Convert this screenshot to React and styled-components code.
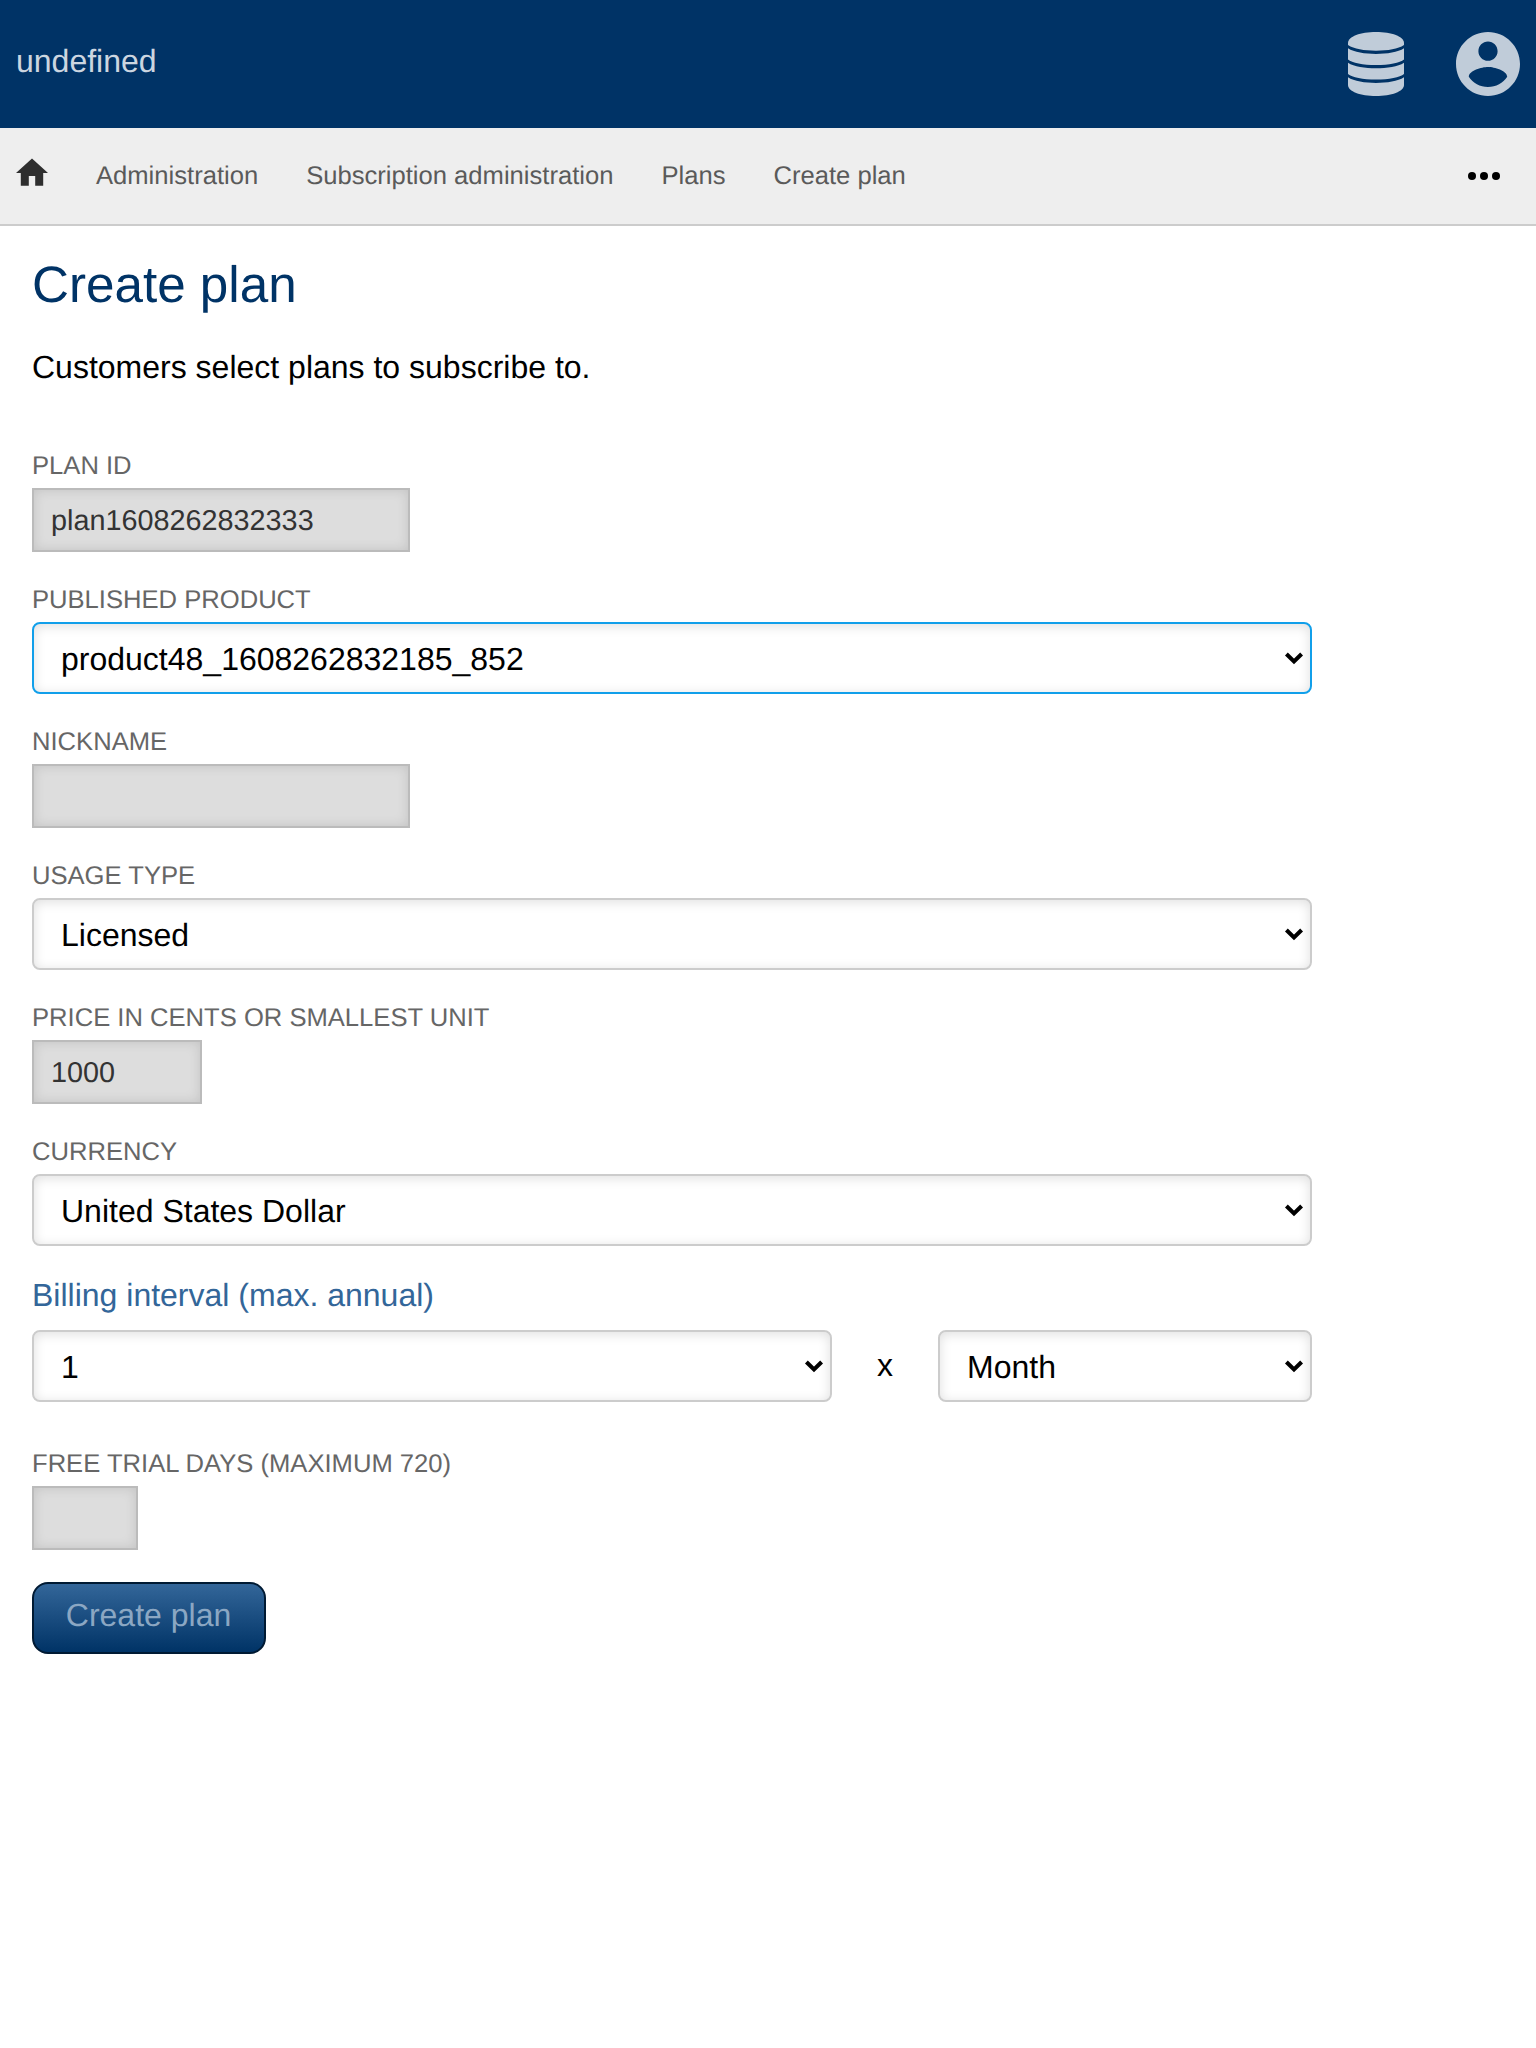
import React from 'react';
import styled, { createGlobalStyle } from 'styled-components';

const GlobalStyle = createGlobalStyle`
  *, *::before, *::after { box-sizing: border-box; }
  html { background: #fff; }
  body {
    margin: 0;
    font-family: "Liberation Sans", Arial, Helvetica, sans-serif;
    font-size: 32px;
    color: #000;
    text-rendering: geometricPrecision;
  }
  input, select, button { font-family: inherit; margin: 0; text-rendering: inherit; }
`;

const Page = styled.div`
  min-height: 2048px;
  background: #fff;
`;

const Header = styled.header`
  display: flex;
  align-items: center;
  justify-content: space-between;
  height: 128px;
  padding: 0 16px;
  background: #003366;
`;

const Brand = styled.a`
  padding-bottom: 7px;
  line-height: 36px;
  color: #ccd6e0;
`;

const HeaderActions = styled.div`
  display: flex;
  align-items: center;
  gap: 52px;
  color: #c0ccd9;
  svg { display: block; fill: currentColor; }
`;

const NavBar = styled.nav`
  display: flex;
  align-items: center;
  height: 98px;
  padding: 0 36px 0 16px;
  background: #eee;
  border-bottom: 2px solid #ccc;
`;

const HomeLink = styled.a`
  display: block;
  width: 32px;
  height: 32px;
  margin: 0 48px 6px 0;
  svg { display: block; fill: #2e2e2e; }
`;

const Crumbs = styled.div`
  display: flex;
  flex: 1;
  gap: 48px;
`;

const Crumb = styled.a`
  font-size: 25.6px;
  line-height: 30px;
  color: #5a5a5a;
`;

const MoreButton = styled.a`
  display: flex;
  gap: 4px;
`;

const Dot = styled.span`
  width: 8px;
  height: 8px;
  border-radius: 50%;
  background: #000;
`;

const Main = styled.main`
  display: flex;
  flex-direction: column;
  align-items: flex-start;
  width: 1344px;
  padding: 29px 32px 0;
`;

const Title = styled.h1`
  margin: 0;
  font-size: 51.2px;
  font-weight: 400;
  line-height: 60px;
  color: #003366;
`;

const Intro = styled.p`
  margin: 34px 0 0;
  line-height: 36px;
`;

const Form = styled.form`
  display: flex;
  flex-direction: column;
  align-items: flex-start;
  width: 100%;
  margin-top: 65px;
`;

const Field = styled.div`
  display: flex;
  flex-direction: column;
  align-items: flex-start;
  width: 100%;
  margin-bottom: ${(p) => p.$after ?? 32}px;
`;

const Label = styled.label`
  height: 38px;
  font-size: 25.6px;
  line-height: 32px;
  text-transform: uppercase;
  color: #666;
`;

const Input = styled.input`
  width: ${(p) => p.$width}px;
  height: 64px;
  padding: 2px 17px 0;
  border: 2px solid #bbb;
  border-radius: 0;
  outline: none;
  background: #ddd;
  box-shadow: inset 0 0 12px rgba(0, 0, 0, 0.12);
  font-size: 28.8px;
  color: #333;
`;

const SelectBox = styled.div`
  display: grid;
  grid-template-columns: 1fr 26px;
  align-items: center;
  width: ${(p) => p.$width ?? 1280}px;
  height: 72px;
  border: 2px solid ${(p) => (p.$active ? '#119fea' : '#ccc')};
  border-radius: 8px;
  background: #fff;
  box-shadow: inset 0 2px 12px rgba(0, 0, 0, 0.13);
`;

const NativeSelect = styled.select`
  grid-column: 1 / -1;
  grid-row: 1;
  appearance: none;
  height: 68px;
  padding: 1px 26px 0 27px;
  border: 0;
  outline: none;
  background: transparent;
  font-size: 32px;
  color: #000;
`;

const ArrowIcon = styled.svg`
  grid-column: 2;
  grid-row: 1;
  pointer-events: none;
`;

const GroupTitle = styled.h2`
  height: 54px;
  margin: 0;
  font-size: 32px;
  font-weight: 400;
  line-height: 38px;
  color: #336699;
`;

const IntervalRow = styled.div`
  display: flex;
  align-items: center;
`;

const Times = styled.span`
  width: 106px;
  padding-bottom: 3px;
  text-align: center;
  line-height: 36px;
`;

const SubmitButton = styled.button`
  width: 234px;
  height: 72px;
  padding: 0 1px 6px 0;
  border: 2px solid #001a33;
  border-radius: 16px;
  background: linear-gradient(#336699, #003366);
  font-size: 32px;
  color: #8ba7c3;
`;

function DatabaseIcon() {
  return (
    <svg width="56" height="64" viewBox="0 0 56 64">
      <path d="M0 11C0 4.500 12.500 0 28 0s28 4.500 28 11v2C50 17 40 18.700 28 18.700S6 17 0 13z" />
      <path d="M0 16.300C6 20.300 17 22 28 22s22-1.700 28-5.700V27.500C52 31 41 33 28 33S4 31 0 27.500z" />
      <path d="M0 30.800C6 34.800 17 36.300 28 36.300s22-1.500 28-5.500V42C52 45.500 41 47.600 28 47.600S4 45.500 0 42z" />
      <path d="M0 45.300C6 49.300 17 51 28 51s22-1.700 28-5.700V53C56 59.500 43.500 64 28 64S0 59.500 0 53z" />
    </svg>
  );
}

function AccountIcon() {
  return (
    <svg width="64" height="64" viewBox="2 2 20 20">
      <path d="M12 2C6.480 2 2 6.480 2 12s4.480 10 10 10 10-4.480 10-10S17.520 2 12 2zm0 3c1.660 0 3 1.340 3 3s-1.340 3-3 3-3-1.340-3-3 1.340-3 3-3zm0 14.200c-2.500 0-4.710-1.280-6-3.220.030-1.990 4-3.080 6-3.080 1.990 0 5.970 1.090 6 3.080-1.290 1.940-3.500 3.220-6 3.220z" />
    </svg>
  );
}

function HomeIcon() {
  return (
    <svg width="32" height="32" viewBox="2 2.0625 20 20">
      <path d="M10 20v-6h4v6h5v-8h3L12 3 2 12h3v8z" />
    </svg>
  );
}

function SelectField({ label, value, active, after }) {
  return (
    <Field $after={after}>
      <Label>{label}</Label>
      <Select value={value} active={active} />
    </Field>
  );
}

function Select({ value, active, width }) {
  return (
    <SelectBox $active={active} $width={width}>
      <NativeSelect defaultValue={value}>
        <option>{value}</option>
      </NativeSelect>
      <ArrowIcon width="20" height="14" viewBox="0 0 20 14">
        <path d="M2.400 3L10 10.500L17.600 3" fill="none" stroke="#000" strokeWidth="4" />
      </ArrowIcon>
    </SelectBox>
  );
}

function InputField({ label, value = '', width, after }) {
  return (
    <Field $after={after}>
      <Label>{label}</Label>
      <Input $width={width} defaultValue={value} />
    </Field>
  );
}

export default function App() {
  return (
    <Page>
      <GlobalStyle />
      <Header>
        <Brand>undefined</Brand>
        <HeaderActions>
          <DatabaseIcon />
          <AccountIcon />
        </HeaderActions>
      </Header>
      <NavBar>
        <HomeLink><HomeIcon /></HomeLink>
        <Crumbs>
          {['Administration', 'Subscription administration', 'Plans', 'Create plan'].map((c) => (
            <Crumb key={c}>{c}</Crumb>
          ))}
        </Crumbs>
        <MoreButton><Dot /><Dot /><Dot /></MoreButton>
      </NavBar>
      <Main>
        <Title>Create plan</Title>
        <Intro>Customers select plans to subscribe to.</Intro>
        <Form>
          <InputField label="Plan ID" value="plan1608262832333" width={378} />
          <SelectField label="Published product" value="product48_1608262832185_852" active />
          <InputField label="Nickname" width={378} />
          <SelectField label="Usage type" value="Licensed" />
          <InputField label="Price in cents or smallest unit" value="1000" width={170} />
          <SelectField label="Currency" value="United States Dollar" after={30} />
          <Field $after={46}>
            <GroupTitle>Billing interval (max. annual)</GroupTitle>
            <IntervalRow>
              <Select value="1" width={800} />
              <Times>x</Times>
              <Select value="Month" width={374} />
            </IntervalRow>
          </Field>
          <InputField label="Free trial days (maximum 720)" width={106} />
          <SubmitButton type="button">Create plan</SubmitButton>
        </Form>
      </Main>
    </Page>
  );
}
